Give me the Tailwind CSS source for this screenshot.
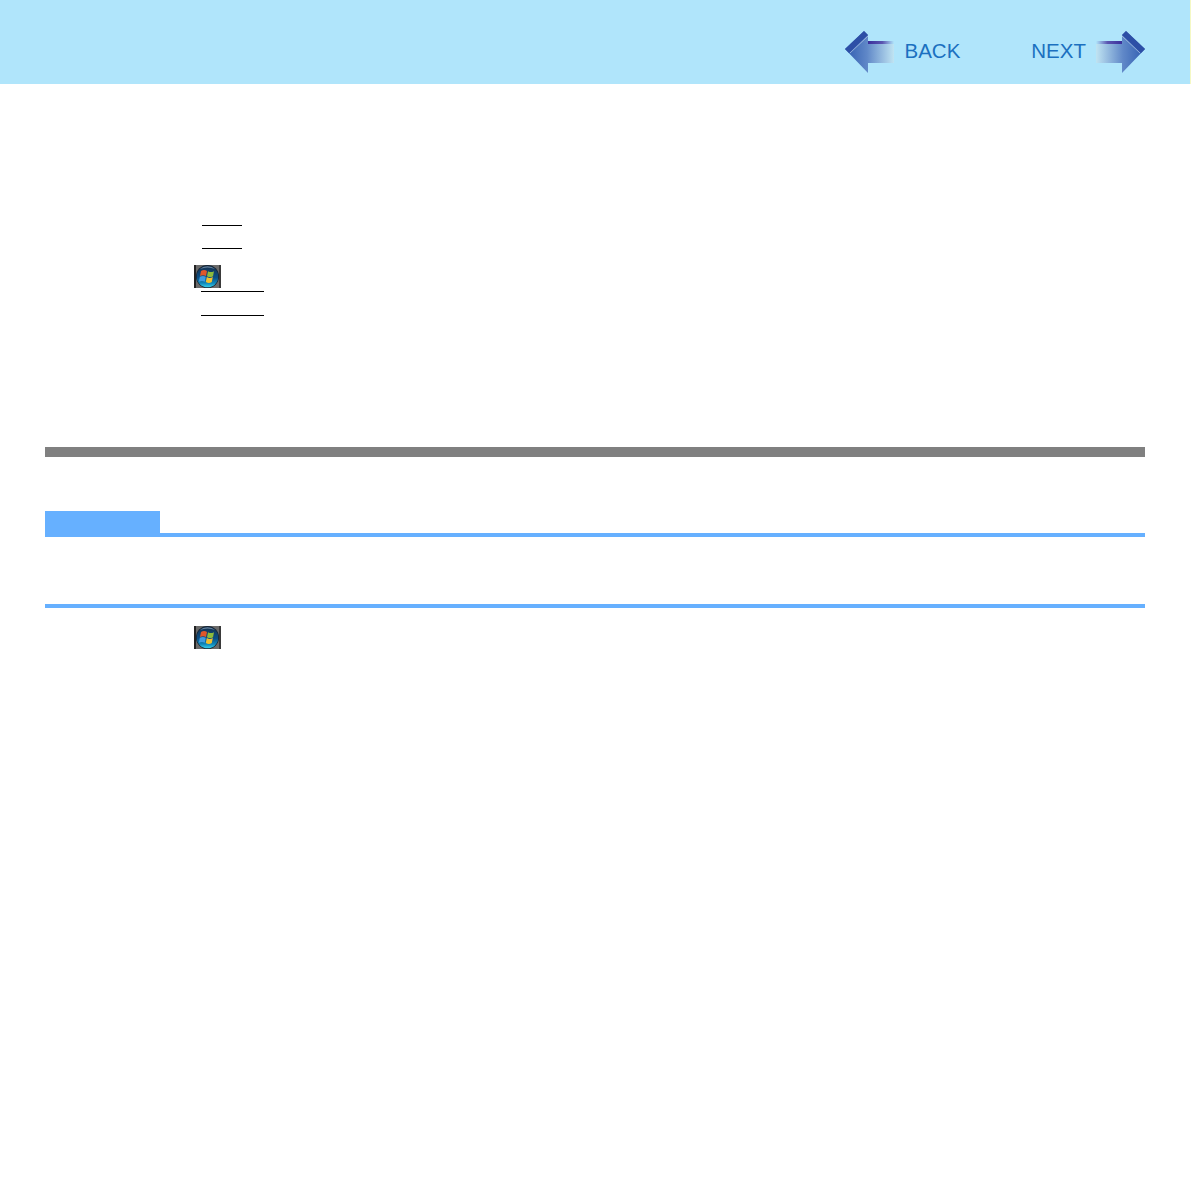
<!DOCTYPE html>
<html lang="en">
<head>
    <meta charset="UTF-8">
    <title>Manual page</title>
    <script src="https://cdn.jsdelivr.net/npm/@tailwindcss/browser@4"></script>
</head>
<body class="bg-white font-['Liberation_Sans',Arial,sans-serif]">
    <svg width="0" height="0" class="absolute">
        <defs>
            <linearGradient id="arrowFill" x1="0" x2="1" y1="0" y2="0">
                <stop offset="0" stop-color="#2f5cb0"/>
                <stop offset="0.45" stop-color="#6088c8"/>
                <stop offset="1" stop-color="#c0e4f2"/>
            </linearGradient>
            <linearGradient id="arrowTop" x1="0" x2="1" y1="0" y2="0">
                <stop offset="0" stop-color="#3a2f9c"/>
                <stop offset="0.55" stop-color="#5a54b0"/>
                <stop offset="1" stop-color="#b0e5fb"/>
            </linearGradient>
            <symbol id="arrow" viewBox="0 0 50 44">
                <path d="M23 11H49V33H23V43L0 19L19 1L23 5Z" fill="url(#arrowFill)"/>
                <path d="M23 11H49V14H23Z" fill="url(#arrowTop)"/>
                <path d="M0 19L19 1L23 5L4 23Z" fill="#2d4fa6"/>
                <path d="M5 23L23 6" stroke="#c9dcef" stroke-width="0.6" fill="none"/>
            </symbol>
            <linearGradient id="globe" x1="0" x2="0" y1="0" y2="1">
                <stop offset="0" stop-color="#16304e"/>
                <stop offset="0.55" stop-color="#0c4f86"/>
                <stop offset="0.8" stop-color="#0f86b8"/>
                <stop offset="1" stop-color="#38d0ea"/>
            </linearGradient>
            <symbol id="winlogo" viewBox="0 0 27 23">
                <rect width="27" height="23" fill="#6a6a6a"/>
                <rect width="2" height="23" fill="#222"/>
                <rect x="25" width="2" height="23" fill="#3a3a3a"/>
                <circle cx="13.500" cy="11.500" r="11.500" fill="#12202e"/>
                <circle cx="13.500" cy="11.500" r="10.800" fill="url(#globe)"/>
                <path d="M6 4a10 8 0 0 1 15 0a12 6 0 0 0-15 0z" fill="#8fa6ba" opacity="0.7"/>
                <path d="M7 6c2.200-1.200 4-1.200 6 0l-1 5c-2-1-3.800-1-6 0z" fill="#e0562a"/>
                <path d="M14 6.200c2 1.200 3.800 1.200 6 0l-1 5c-2 1.200-3.800 1.200-6 0z" fill="#8dbb3c"/>
                <path d="M5.800 11.800c2.200-1 4-1 6 0l-1 5c-2-1-3.800-1-6 0z" fill="#3f9be0"/>
                <path d="M12.800 12c2 1.200 3.800 1.200 6 0l-1 5c-2 1.200-3.800 1.200-6 0z" fill="#f3c02e"/>
            </symbol>
        </defs>
    </svg>

    <!-- Header -->
    <header class="h-[84px] bg-[#b0e5fb] border-r border-[#f4f8c4] flex items-start justify-end pr-[45px] pt-[30px]">
        <a class="flex items-start">
            <svg class="w-[50px] h-[44px]"><use href="#arrow"/></svg>
            <span class="ml-[9px] mt-[8px] text-[20.5px] leading-[26px] text-[#1b70c0]">BACK</span>
        </a>
        <a class="flex items-start ml-[71px]">
            <span class="mr-[9px] mt-[8px] text-[20.5px] leading-[26px] text-[#1b70c0]">NEXT</span>
            <svg class="w-[50px] h-[44px] -scale-x-100"><use href="#arrow"/></svg>
        </a>
    </header>

    <main class="pl-[45px] pr-[46px]">
        <!-- Key rows -->
        <div class="pt-[141px] pl-[156px] flex flex-col">
            <div class="w-[40px] h-px bg-black ml-[1px]"></div>
            <div class="w-[40px] h-px bg-black ml-[1px] mt-[22px]"></div>
            <svg class="w-[27px] h-[23px] -ml-[7px] mt-[16px]"><use href="#winlogo"/></svg>
            <div class="w-[63px] h-px bg-black mt-[3px]"></div>
            <div class="w-[63px] h-px bg-black mt-[23px]"></div>
        </div>

        <div class="h-[10px] bg-[#808080] mt-[131px]"></div>

        <!-- Note box -->
        <div class="mt-[54px]">
            <div class="w-[115px] h-[22px] bg-[#66b0ff]"></div>
            <div class="h-[4px] bg-[#66b0ff]"></div>
            <div class="h-[67px]"></div>
            <div class="h-[4px] bg-[#66b0ff]"></div>
        </div>

        <svg class="w-[27px] h-[23px] ml-[149px] mt-[18px]"><use href="#winlogo"/></svg>
    </main>
</body>
</html>
